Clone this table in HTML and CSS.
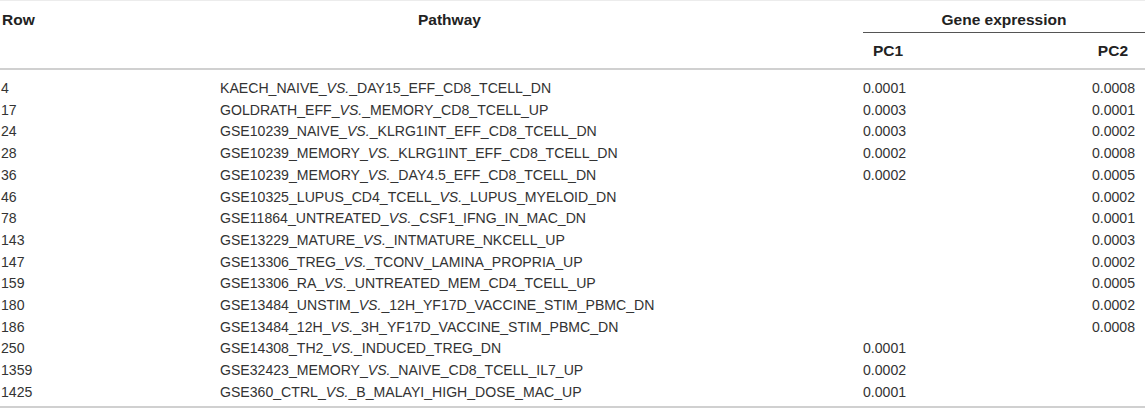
FILE: index.html
```html
<!DOCTYPE html>
<html>
<head>
<meta charset="utf-8">
<link rel="stylesheet" href="styles.css">
</head>
<body>
<table class="tbl">
  <colgroup>
    <col class="c-row">
    <col class="c-path">
    <col class="c-pc1">
    <col class="c-pc2">
  </colgroup>
  <thead>
    <tr class="h1">
      <th class="h-row" rowspan="2">Row</th>
      <th class="h-path" rowspan="2">Pathway</th>
      <th class="h-gene" colspan="2">Gene expression</th>
    </tr>
    <tr class="h2">
      <th class="h-pc1">PC1</th>
      <th class="h-pc2">PC2</th>
    </tr>
  </thead>
  <tbody>
    <tr><td class="d-row">4</td><td class="d-path">KAECH_NAIVE_<i>VS.</i>_DAY15_EFF_CD8_TCELL_DN</td><td class="d-pc1">0.0001</td><td class="d-pc2">0.0008</td></tr>
    <tr><td class="d-row">17</td><td class="d-path">GOLDRATH_EFF_<i>VS.</i>_MEMORY_CD8_TCELL_UP</td><td class="d-pc1">0.0003</td><td class="d-pc2">0.0001</td></tr>
    <tr><td class="d-row">24</td><td class="d-path">GSE10239_NAIVE_<i>VS.</i>_KLRG1INT_EFF_CD8_TCELL_DN</td><td class="d-pc1">0.0003</td><td class="d-pc2">0.0002</td></tr>
    <tr><td class="d-row">28</td><td class="d-path">GSE10239_MEMORY_<i>VS.</i>_KLRG1INT_EFF_CD8_TCELL_DN</td><td class="d-pc1">0.0002</td><td class="d-pc2">0.0008</td></tr>
    <tr><td class="d-row">36</td><td class="d-path">GSE10239_MEMORY_<i>VS.</i>_DAY4.5_EFF_CD8_TCELL_DN</td><td class="d-pc1">0.0002</td><td class="d-pc2">0.0005</td></tr>
    <tr><td class="d-row">46</td><td class="d-path">GSE10325_LUPUS_CD4_TCELL_<i>VS.</i>_LUPUS_MYELOID_DN</td><td class="d-pc1"></td><td class="d-pc2">0.0002</td></tr>
    <tr><td class="d-row">78</td><td class="d-path">GSE11864_UNTREATED_<i>VS.</i>_CSF1_IFNG_IN_MAC_DN</td><td class="d-pc1"></td><td class="d-pc2">0.0001</td></tr>
    <tr><td class="d-row">143</td><td class="d-path">GSE13229_MATURE_<i>VS.</i>_INTMATURE_NKCELL_UP</td><td class="d-pc1"></td><td class="d-pc2">0.0003</td></tr>
    <tr><td class="d-row">147</td><td class="d-path">GSE13306_TREG_<i>VS.</i>_TCONV_LAMINA_PROPRIA_UP</td><td class="d-pc1"></td><td class="d-pc2">0.0002</td></tr>
    <tr><td class="d-row">159</td><td class="d-path">GSE13306_RA_<i>VS.</i>_UNTREATED_MEM_CD4_TCELL_UP</td><td class="d-pc1"></td><td class="d-pc2">0.0005</td></tr>
    <tr><td class="d-row">180</td><td class="d-path">GSE13484_UNSTIM_<i>VS.</i>_12H_YF17D_VACCINE_STIM_PBMC_DN</td><td class="d-pc1"></td><td class="d-pc2">0.0002</td></tr>
    <tr><td class="d-row">186</td><td class="d-path">GSE13484_12H_<i>VS.</i>_3H_YF17D_VACCINE_STIM_PBMC_DN</td><td class="d-pc1"></td><td class="d-pc2">0.0008</td></tr>
    <tr><td class="d-row">250</td><td class="d-path">GSE14308_TH2_<i>VS.</i>_INDUCED_TREG_DN</td><td class="d-pc1">0.0001</td><td class="d-pc2"></td></tr>
    <tr><td class="d-row">1359</td><td class="d-path">GSE32423_MEMORY_<i>VS.</i>_NAIVE_CD8_TCELL_IL7_UP</td><td class="d-pc1">0.0002</td><td class="d-pc2"></td></tr>
    <tr><td class="d-row">1425</td><td class="d-path">GSE360_CTRL_<i>VS.</i>_B_MALAYI_HIGH_DOSE_MAC_UP</td><td class="d-pc1">0.0001</td><td class="d-pc2"></td></tr>
  </tbody>
</table>
</body>
</html>
```
FILE: styles.css
```css
html, body {
  margin: 0;
  padding: 0;
  background: #fff;
}
body {
  font-family: "Liberation Sans", Arial, sans-serif;
  color: #333;
}
.tbl {
  width: 1145px;
  border-collapse: collapse;
  table-layout: fixed;
  border-top: 1px solid #ececec;
  border-bottom: 2px solid #d0d0d0;
}
.c-row { width: 220px; }
.c-path { width: 643px; }
.c-pc1 { width: 141px; }
.c-pc2 { width: 141px; }

.tbl th {
  font-weight: bold;
  font-size: 15.5px;
  color: #222;
  padding: 0;
  text-align: left;
}
.h1 th { height: 32px; vertical-align: top; padding-top: 10px; line-height: 17px; box-sizing: border-box; }
.h2 th { height: 35px; vertical-align: middle; line-height: 17px; }
.h-row { padding-left: 2px !important; }
.h-path { padding-left: 198px !important; }
.h-gene {
  text-align: center !important;
  border-bottom: 1px solid #555;
}
.h-pc1 { padding-left: 10px !important; }
.h-pc2 { text-align: right !important; padding-right: 17px !important; }
thead tr.h2 { border-bottom: 2px solid #d0d0d0; }
thead tr.h1 .h-row, thead tr.h1 .h-path { border-bottom: 2px solid #d0d0d0; }

.tbl td {
  font-size: 14.1px;
  line-height: 21.7px;
  padding: 0;
  white-space: nowrap;
}
tbody tr:first-child td { padding-top: 8px; }
tbody tr:last-child td { padding-bottom: 2px; }
.d-row { padding-left: 1px !important; }
.d-pc2 { text-align: right; padding-right: 10px !important; }
```
